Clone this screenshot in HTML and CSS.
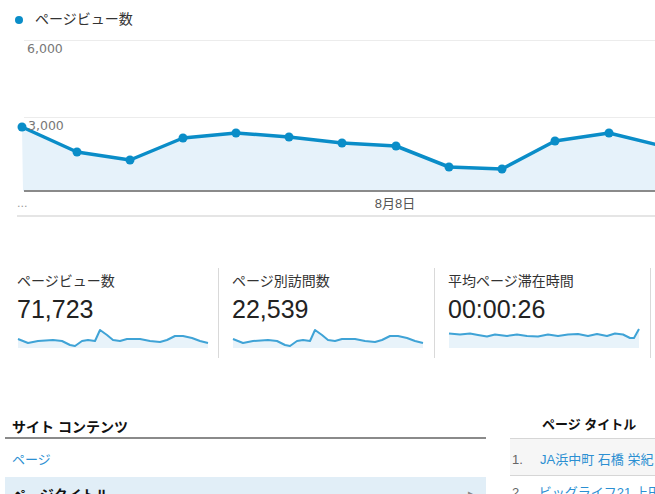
FILE: index.html
```html
<!DOCTYPE html>
<html lang="ja">
<head>
<meta charset="utf-8">
<link rel="stylesheet" href="styles.css">
</head>
<body>
<div class="page">
  <div class="legend"><span class="dot"></span><span class="legend-text">ページビュー数</span></div>
  <svg class="chart" width="655" height="182" viewBox="0 38 655 182">
    <line x1="24" y1="40.5" x2="655" y2="40.5" stroke="#ececec" stroke-width="1"/>
    <line x1="24" y1="117.5" x2="655" y2="117.5" stroke="#ececec" stroke-width="1"/>
    <polygon fill="#e6f2fa" points="23,191 22,127 77,152 130,160 183,138 236,133 289,137 342,143 396,146 449,167 502,169 555,141 609,133 662,146 662,191"/>
    <polyline fill="none" stroke="#0a8dc8" stroke-width="3.5" stroke-linejoin="round" points="22,127 77,152 130,160 183,138 236,133 289,137 342,143 396,146 449,167 502,169 555,141 609,133 662,146"/>
    <g fill="#0a8dc8">
      <circle cx="22" cy="127" r="4.5"/><circle cx="77" cy="152" r="4.5"/><circle cx="130" cy="160" r="4.5"/>
      <circle cx="183" cy="138" r="4.5"/><circle cx="236" cy="133" r="4.5"/><circle cx="289" cy="137" r="4.5"/>
      <circle cx="342" cy="143" r="4.5"/><circle cx="396" cy="146" r="4.5"/><circle cx="449" cy="167" r="4.5"/>
      <circle cx="502" cy="169" r="4.5"/><circle cx="555" cy="141" r="4.5"/><circle cx="609" cy="133" r="4.5"/>
    </g>
    <line x1="24" y1="191" x2="655" y2="191" stroke="#8a8a8a" stroke-width="2"/>
    <line x1="17" y1="216" x2="655" y2="216" stroke="#dcdcdc" stroke-width="1.5"/>
    <text class="axis" x="27" y="53">6,000</text>
    <text class="axis" x="28" y="129.5">3,000</text>
    <text class="axis dots" x="17" y="207">...</text>
    <text class="axis date" x="395" y="208" text-anchor="middle">8月8日</text>
  </svg>

  <div class="cards">
    <div class="card">
      <div class="card-title">ページビュー数</div>
      <div class="card-value">71,723</div>
      <svg class="spark" width="196" height="24" viewBox="16 326 196 24">
        <polygon fill="#e8f3fa" points="18,339 28,343 38,341 53,340 62,341 70,345 75,346 82,341 88,340 95,341 100,330 107,335 113,340 120,341 127,339 140,339 150,341 160,342 167,340 175,336 183,336 192,338 200,341 208,343 208,348 18,348"/>
        <polyline fill="none" stroke="#3fa3d6" stroke-width="2" stroke-linejoin="round" points="18,339 28,343 38,341 53,340 62,341 70,345 75,346 82,341 88,340 95,341 100,330 107,335 113,340 120,341 127,339 140,339 150,341 160,342 167,340 175,336 183,336 192,338 200,341 208,343"/>
      </svg>
    </div>
    <div class="card bordered">
      <div class="card-title">ページ別訪問数</div>
      <div class="card-value">22,539</div>
      <svg class="spark" width="196" height="24" viewBox="16 326 196 24">
        <polygon fill="#e8f3fa" points="18,339 28,343 38,341 53,340 62,341 70,345 75,346 82,341 88,340 95,341 100,330 107,335 113,340 120,341 127,339 140,339 150,341 160,342 167,340 175,336 183,336 192,338 200,341 208,343 208,348 18,348"/>
        <polyline fill="none" stroke="#3fa3d6" stroke-width="2" stroke-linejoin="round" points="18,339 28,343 38,341 53,340 62,341 70,345 75,346 82,341 88,340 95,341 100,330 107,335 113,340 120,341 127,339 140,339 150,341 160,342 167,340 175,336 183,336 192,338 200,341 208,343"/>
      </svg>
    </div>
    <div class="card bordered">
      <div class="card-title">平均ページ滞在時間</div>
      <div class="card-value">00:00:26</div>
      <svg class="spark" width="196" height="24" viewBox="447 326 196 24">
        <polygon fill="#e8f3fa" points="449,333.5 460,334.5 470,333.5 478,335 487,336.5 495,334.5 507,336 517,334.5 527,336 538,336.5 548,334.5 558,336 568,334.5 578,334 588,336 597,334 607,336 615,333.5 623,334.5 630,338 634,338 639,329 639,348 449,348"/>
        <polyline fill="none" stroke="#3fa3d6" stroke-width="2" stroke-linejoin="round" points="449,333.5 460,334.5 470,333.5 478,335 487,336.5 495,334.5 507,336 517,334.5 527,336 538,336.5 548,334.5 558,336 568,334.5 578,334 588,336 597,334 607,336 615,333.5 623,334.5 630,338 634,338 639,329"/>
      </svg>
    </div>
    <div class="card bordered last"></div>
  </div>

  <div class="bottom">
    <div class="left">
      <div class="left-head">サイト コンテンツ</div>
      <div class="left-link">ページ</div>
      <div class="left-row"><span class="row-label">ページタイトル</span><span class="arrow">▸</span></div>
    </div>
    <div class="right">
      <div class="right-head">ページ タイトル</div>
      <div class="trow first"><span class="num">1.</span><span class="tlink">JA浜中町 石橋 栄紀</span></div>
      <div class="trow"><span class="num">2.</span><span class="tlink">ビッグライフ21 上田</span></div>
    </div>
  </div>
</div>
</body>
</html>
```
FILE: styles.css
```css
html, body {
  margin: 0;
  padding: 0;
  background: #fff;
}
body {
  width: 655px;
  height: 494px;
  overflow: hidden;
  font-family: "Liberation Sans", "Noto Sans CJK JP", sans-serif;
  color: #333;
}
.page {
  width: 655px;
  overflow: hidden;
}
.legend {
  height: 38px;
  display: flex;
  align-items: center;
  padding-left: 15px;
  box-sizing: border-box;
}
.dot {
  width: 8px;
  height: 8px;
  border-radius: 50%;
  background: #0a8dc8;
  margin-right: 12px;
  margin-top: 1px;
}
.legend-text {
  font-size: 14px;
  line-height: 18px;
  color: #333;
}
.chart {
  display: block;
}
.axis {
  font-family: "DejaVu Sans", sans-serif;
  font-size: 12.5px;
  fill: #777;
}
.axis.date {
  font-family: "Liberation Sans", "Noto Sans CJK JP", sans-serif;
  font-size: 13px;
  fill: #555;
}
.axis.dots {
  font-size: 11px;
  fill: #999;
}
.cards {
  display: flex;
  margin-top: 48px;
  padding-left: 17px;
  height: 90px;
}
.card {
  width: 201px;
  padding-top: 4px;
  box-sizing: border-box;
  flex: none;
}
.card.bordered {
  width: 216px;
  border-left: 1px solid #d9d9d9;
  padding-left: 13px;
}
.card.last {
  width: 10px;
}
.card-title {
  font-size: 14px;
  line-height: 18px;
  color: #333;
  white-space: nowrap;
}
.card-value {
  margin-top: 4px;
  font-size: 25px;
  line-height: 30px;
  color: #222;
}
.spark {
  display: block;
  margin-top: 2px;
  margin-left: -1px;
}
.bottom {
  display: flex;
  margin-top: 59px;
  padding-left: 5px;
  gap: 24px;
}
.left {
  width: 481px;
  flex: none;
}
.left-head {
  font-size: 14px;
  font-weight: bold;
  line-height: 20px;
  color: #111;
  padding-left: 7px;
  border-bottom: 2px solid #8a8a8a;
}
.left-link {
  margin-top: 11px;
  font-size: 13px;
  line-height: 20px;
  color: #2b8fd2;
  padding-left: 7px;
}
.left-row {
  margin-top: 7px;
  height: 32px;
  background: #e1eef7;
  display: flex;
  justify-content: space-between;
  align-items: center;
  padding: 0 12px 0 7px;
  font-size: 14px;
  font-weight: bold;
  color: #111;
  box-sizing: border-box;
}
.row-label {
  padding-top: 2px;
}
.arrow {
  color: #888;
  font-size: 11px;
  font-weight: normal;
}
.right {
  flex: 1;
  min-width: 0;
  margin-top: -2px;
  white-space: nowrap;
}
.right-head {
  font-size: 13px;
  font-weight: bold;
  line-height: 20px;
  height: 23px;
  color: #111;
  padding-left: 32px;
}
.trow {
  font-size: 13px;
  line-height: 20px;
  padding: 7px 0 0 2px;
  display: flex;
  gap: 16px;
}
.trow.first {
  border-top: 1px solid #d6d6d6;
  border-bottom: 1px solid #d6d6d6;
  background: #f6f6f6;
  padding: 11px 0 5px 2px;
}
.num {
  color: #666;
  width: 12px;
}
.tlink {
  color: #2b8fd2;
}
```
